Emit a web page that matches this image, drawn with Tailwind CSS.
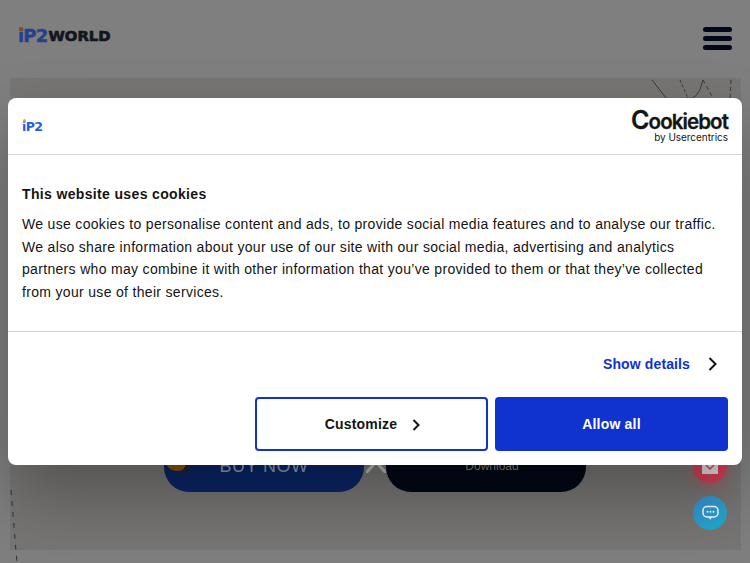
<!doctype html>
<html>
<head>
<meta charset="utf-8">
<script src="https://cdn.jsdelivr.net/npm/@tailwindcss/browser@4"></script>
</head>
<body class="m-0 overflow-hidden">
<div class="relative w-[750px] h-[563px] overflow-hidden bg-[#7f7f7f] font-['Liberation_Sans',Arial,sans-serif]">
  <!-- site header -->
  <header class="h-[78px] flex items-center justify-between pl-[18px] pr-[18px]">
    <div class="relative flex items-end font-['DejaVu_Sans',sans-serif] font-bold leading-none -mt-[6px]">
      <span class="text-[#23418f] text-[18px] tracking-[-0.8px] [-webkit-text-stroke:0.4px_#23418f]">iP2</span><span class="text-[#14161f] text-[14.8px] ml-[1px] mb-[1px] tracking-[0px] [-webkit-text-stroke:0.7px_#14161f]">WORLD</span>
      <span class="absolute left-[1px] top-[0px] w-[4px] h-[4px] rounded-full bg-[#8a4f14]"></span>
    </div>
    <div class="flex flex-col gap-[4px] mt-[-1px]">
      <span class="block w-[29px] h-[5px] rounded-full bg-[#020817]"></span>
      <span class="block w-[29px] h-[5px] rounded-full bg-[#020817]"></span>
      <span class="block w-[29px] h-[5px] rounded-full bg-[#020817]"></span>
    </div>
  </header>
  <!-- hero -->
  <section class="relative ml-[10px] w-[731px] h-[472px] bg-[#777674]">
    <div class="absolute left-[154px] top-[334px] flex gap-[22px]">
      <div class="relative w-[200px] h-[80px] rounded-[25px] bg-[#0a2566] flex items-end justify-center pb-[15px] text-[#8d9ab8] text-[18px] tracking-[0.45px] leading-[22px]">BUY NOW
        <span class="absolute left-[1px] top-[34px] w-[24px] h-[25px] rounded-full bg-[#8a5206]"></span>
        <span class="absolute left-[20px] top-[52px] w-[5px] h-[10px] rotate-[25deg] bg-[#1f2430]"></span>
      </div>
      <div class="w-[200px] h-[80px] rounded-[25px] bg-[#020817] flex items-end justify-center pl-[12px] pb-[19px] text-[#7d7d7d] text-[12px] leading-[14px]">Download</div>
    </div>
    <svg class="absolute left-[356px] top-[386px] w-[20px] h-[9px]" viewBox="0 0 20 9" fill="none" stroke="#b9b9b9" stroke-width="3"><path d="M0 9 L10 -2 L20 9"/></svg>
    <svg class="absolute left-[638px] top-0 w-[90px] h-[22px]" viewBox="0 0 90 22" fill="none" stroke="#2b2b2b" stroke-width="0.8">
      <path d="M4 2 L18 20"/><path d="M32 2 L40 20" stroke-dasharray="3 2"/><path d="M38 20 Q50 24 55 2"/><path d="M55 2 L65 20" stroke-dasharray="4 3"/><path d="M83 2 L82 20" stroke-dasharray="4 3"/>
    </svg>
    <svg class="absolute left-0 top-[410px] w-[12px] h-[75px]" viewBox="0 0 12 75" fill="none" stroke="#222" stroke-width="0.8"><path d="M1 2 L7 75" stroke-dasharray="5 6"/></svg>
  </section>
  <!-- floating buttons -->
  <div class="absolute left-[693px] top-[449px] w-[34px] h-[34px] rounded-full bg-[#d63e57] shadow-[0_4px_14px_rgba(214,62,87,0.45)] flex items-end justify-center pb-[9px]">
    <svg class="w-[16px] h-[13px]" viewBox="0 0 16 13"><rect width="16" height="13" fill="#dcdcdc"/><path d="M4 4 L8 8 L12 4" stroke="#d63e57" stroke-width="1.4" fill="none"/></svg>
  </div>
  <div class="absolute left-[693px] top-[496px] w-[34px] h-[34px] rounded-full bg-gradient-to-br from-[#3b8fd8] to-[#17aec9] flex items-center justify-center">
    <svg class="w-[17px] h-[16px]" viewBox="0 0 17 16" fill="none"><rect x="1" y="1.5" width="15" height="10.5" rx="4" stroke="#fff" stroke-width="1.5"/><path d="M7 12 L8 15 L10 12" fill="#fff"/><circle cx="5.5" cy="6.8" r="1" fill="#fff"/><circle cx="8.5" cy="6.8" r="1" fill="#fff"/><circle cx="11.5" cy="6.8" r="1" fill="#fff"/></svg>
  </div>
  <!-- cookie dialog -->
  <div role="dialog" class="absolute left-[8px] top-[98px] w-[734px] h-[367px] bg-white rounded-[8px] shadow-[0_32px_68px_rgba(0,0,0,0.3)] text-[#141414] flex flex-col">
    <div class="h-[57px] shrink-0 border-b border-[#d6d6d6] flex items-center justify-between pl-[14px] pr-[14px]">
      <div class="relative font-['DejaVu_Sans',sans-serif] font-bold text-[12.5px] leading-none mt-[2px] tracking-[-0.6px] text-[#1d5fe0]">iP2<span class="absolute left-[1px] top-[-2px] w-[3px] h-[3px] rounded-full bg-[#f0a030]"></span></div>
      <div class="flex flex-col items-end text-[#141414] font-['Inter',sans-serif]">
        <span class="text-[20.5px] font-semibold tracking-[-0.9px] leading-[19px] [-webkit-text-stroke:0.3px_#141414]"><span class="text-[25px] leading-[19px]">C</span>ookiebot</span>
        <span class="text-[10px] leading-[10px] font-normal tracking-[-0.05px] mt-[1px]">by Usercentrics</span>
      </div>
    </div>
    <div class="h-[177px] shrink-0 border-b border-[#d6d6d6] px-[14px] pt-[29px]">
      <h2 class="text-[14px] leading-[20px] font-bold tracking-[0.35px]">This website uses cookies</h2>
      <p class="mt-[9px] text-[14px] leading-[22.5px] tracking-[0.32px] whitespace-nowrap">We use cookies to personalise content and ads, to provide social media features and to analyse our traffic.<br>We also share information about your use of our site with our social media, advertising and analytics<br>partners who may combine it with other information that you’ve provided to them or that they’ve collected<br>from your use of their services.</p>
    </div>
    <div class="flex justify-end items-center h-[64px] pr-[25px] shrink-0 gap-[18px]">
      <span class="text-[14px] font-bold tracking-[0.12px] text-[#1032cf]">Show details</span>
      <svg class="w-[9px] h-[14px]" viewBox="0 0 9 14" fill="none" stroke="#141414" stroke-width="2"><path d="M1.5 1 L7.5 7 L1.5 13"/></svg>
    </div>
    <div class="flex gap-[7px] justify-end pr-[14px] pt-[1px]">
      <button class="w-[233px] h-[54px] border-2 border-[#1032cf] rounded-[4px] flex items-center justify-center gap-[15px] pl-[2px] text-[14px] font-bold tracking-[0.2px]">Customize
        <svg class="w-[8px] h-[12px] mt-[2px]" viewBox="0 0 8 12" fill="none" stroke="#141414" stroke-width="2"><path d="M1.5 1 L6.5 6 L1.5 11"/></svg>
      </button>
      <button class="w-[233px] h-[54px] bg-[#1032cf] rounded-[4px] flex items-center justify-center text-white text-[14px] font-bold tracking-[0.2px]">Allow all</button>
    </div>
  </div>
</div>
</body>
</html>
